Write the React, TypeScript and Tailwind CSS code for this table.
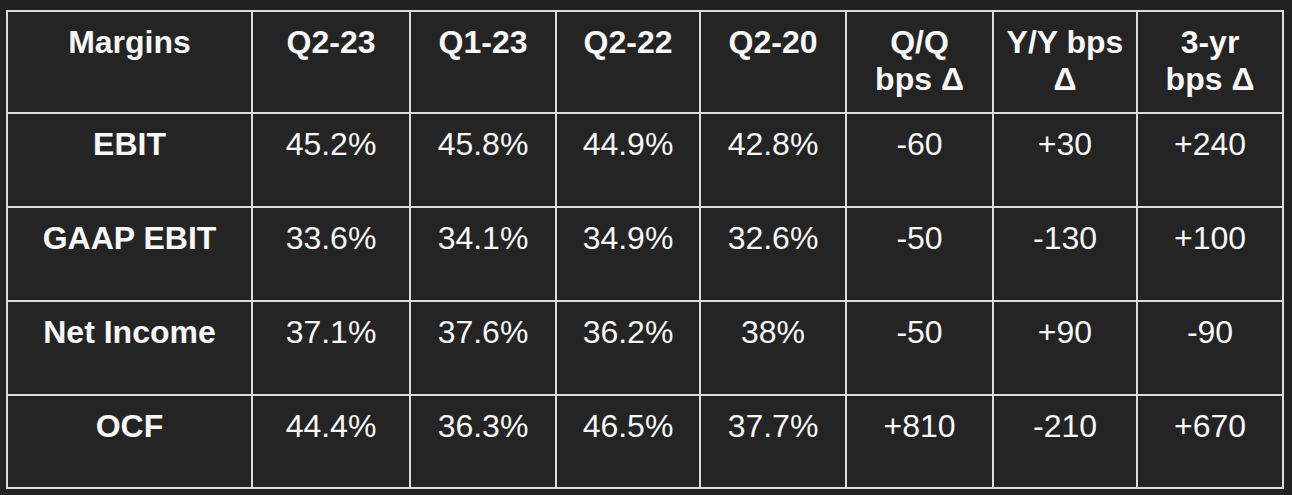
import React from 'react';

type Row = {
  label: string;
  values: string[];
};

const headers: string[][] = [
  ['Margins'],
  ['Q2-23'],
  ['Q1-23'],
  ['Q2-22'],
  ['Q2-20'],
  ['Q/Q', 'bps Δ'],
  ['Y/Y bps', 'Δ'],
  ['3-yr', 'bps Δ'],
];

const rows: Row[] = [
  { label: 'EBIT', values: ['45.2%', '45.8%', '44.9%', '42.8%', '-60', '+30', '+240'] },
  { label: 'GAAP EBIT', values: ['33.6%', '34.1%', '34.9%', '32.6%', '-50', '-130', '+100'] },
  { label: 'Net Income', values: ['37.1%', '37.6%', '36.2%', '38%', '-50', '+90', '-90'] },
  { label: 'OCF', values: ['44.4%', '36.3%', '46.5%', '37.7%', '+810', '-210', '+670'] },
];

const cell = 'bg-[#242424] text-center text-[32px] leading-[37px] text-[#f7f7f7] pt-3';

const App: React.FC = () => {
  return (
    <div
      className="h-[495px] w-full bg-[#222222] pt-[10px] pl-[6px]"
      style={{ fontFamily: '"Liberation Sans", Arial, sans-serif' }}
    >
      <div className="grid w-[1278px] grid-cols-[243px_156px_144px_142px_144px_145px_142px_144px] grid-rows-[100px_92px_92px_92px_91px] gap-[2px] bg-[#dcdcdc] p-[2px]">
        {/* Header */}
        {headers.map((lines, i) => (
          <div key={i} className={`${cell} font-bold`}>
            {lines.map(l => (
              <div key={l}>{l}</div>
            ))}
          </div>
        ))}

        {/* Body */}
        {rows.map(row => (
          <React.Fragment key={row.label}>
            <div className={`${cell} font-bold`}>{row.label}</div>
            {row.values.map((v, j) => (
              <div key={j} className={cell}>
                {v}
              </div>
            ))}
          </React.Fragment>
        ))}
      </div>
    </div>
  );
};

export default App;
